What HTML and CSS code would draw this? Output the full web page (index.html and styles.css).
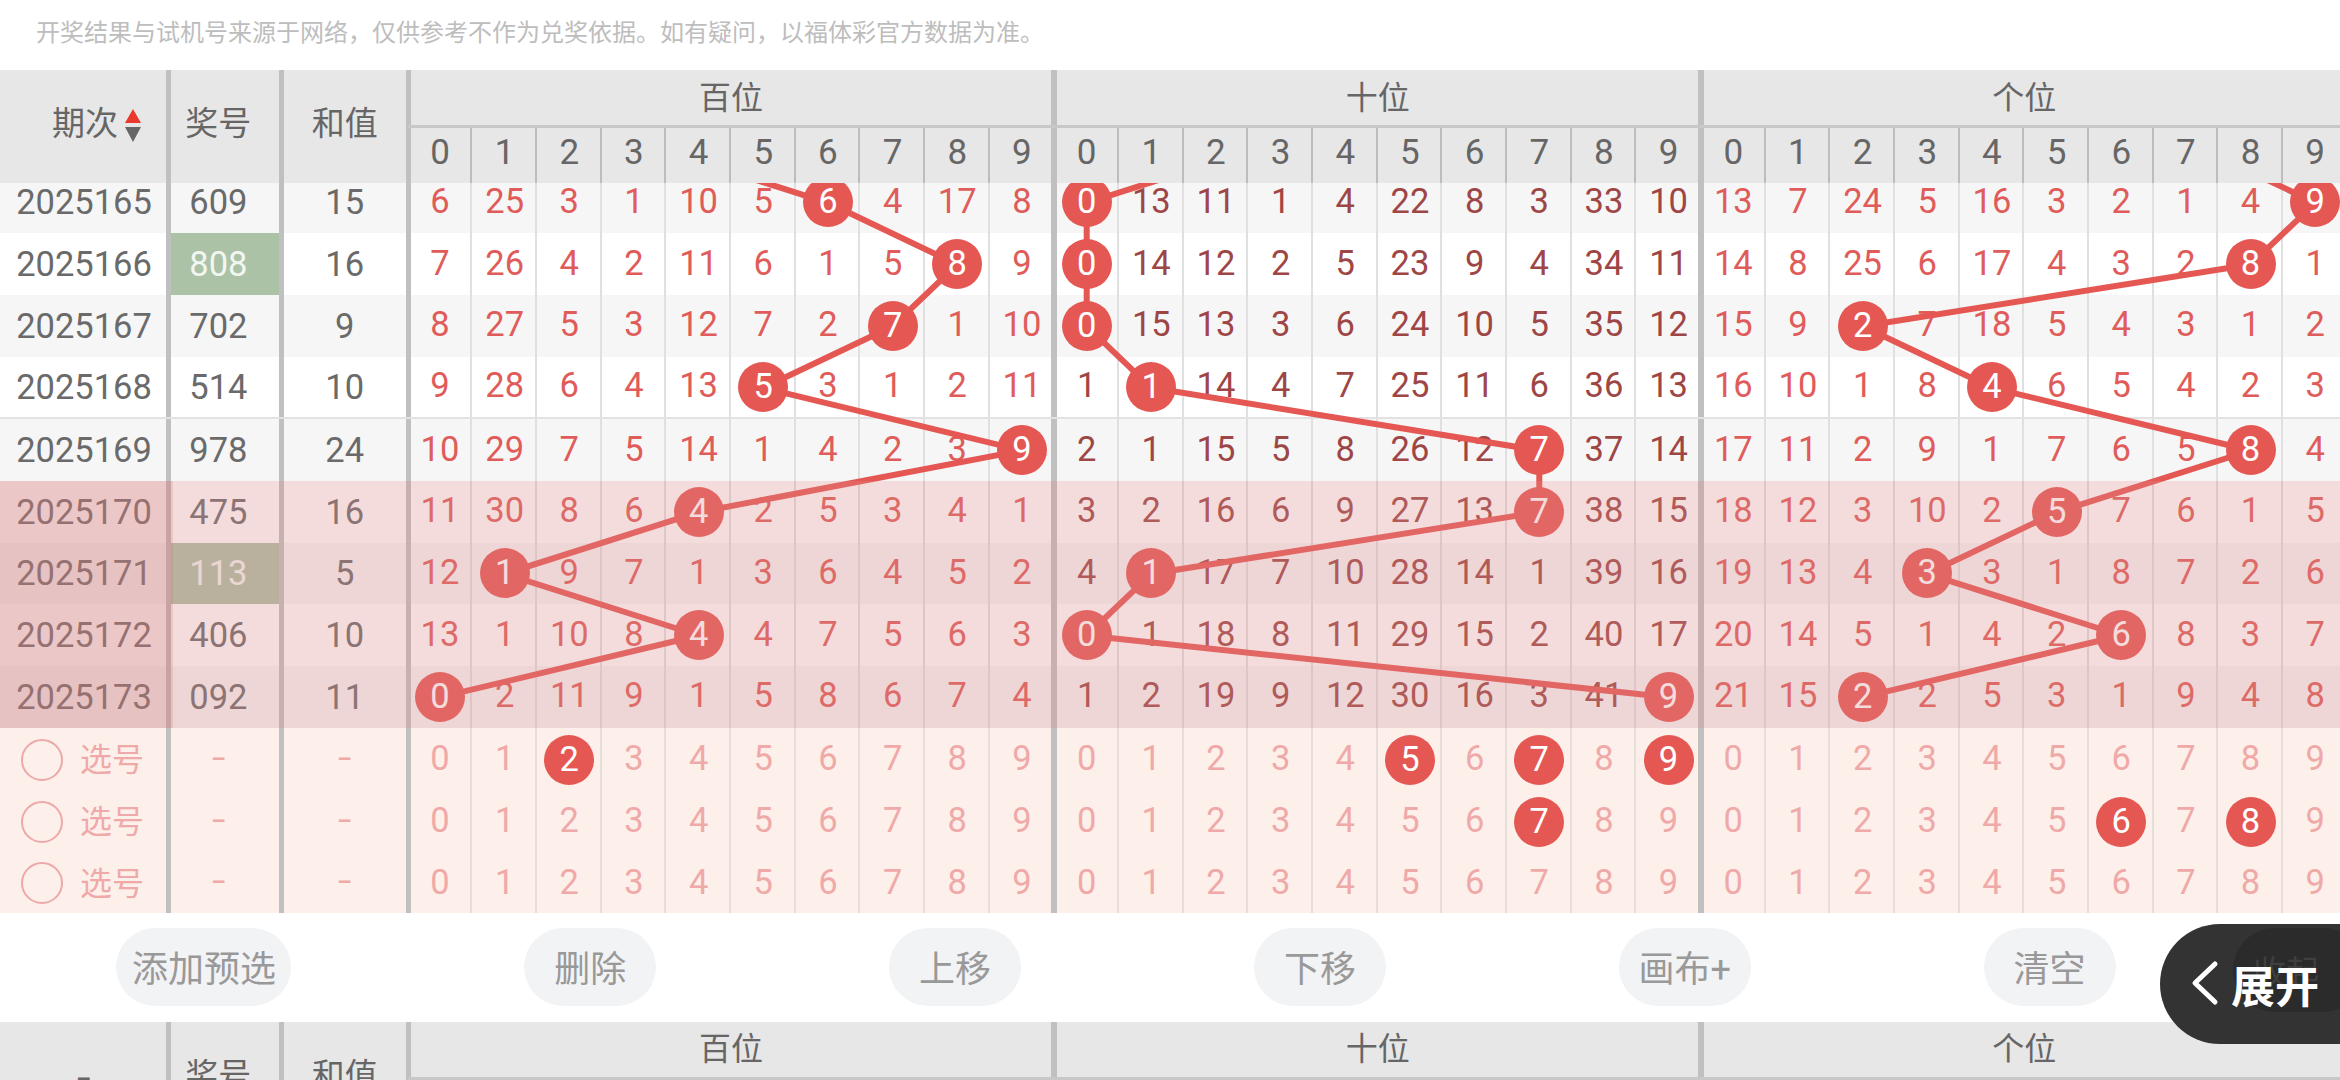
FILE: index.html
```html
<!DOCTYPE html>
<html lang="zh">
<head>
<meta charset="utf-8">
<title>走势图</title>
<link rel="stylesheet" href="styles.css">
</head>
<body>
<div class="page">
<p class="notice">开奖结果与试机号来源于网络，仅供参考不作为兑奖依据。如有疑问，以福体彩官方数据为准。</p>

<div class="head">
  <div class="period h-period"><span>期次</span>
    <svg class="sort" width="16" height="33" viewBox="0 0 16 33"><path class="up" d="M8 0L16 14H0Z"/><path class="down" d="M0 18H16L8 33Z"/></svg>
  </div>
  <div class="prize">奖号</div>
  <div class="sum">和值</div>
  <div class="hgrp"><div class="title">百位</div><div class="grp"><span>0</span><span>1</span><span>2</span><span>3</span><span>4</span><span>5</span><span>6</span><span>7</span><span>8</span><span>9</span></div></div>
  <div class="hgrp"><div class="title">十位</div><div class="grp"><span>0</span><span>1</span><span>2</span><span>3</span><span>4</span><span>5</span><span>6</span><span>7</span><span>8</span><span>9</span></div></div>
  <div class="hgrp"><div class="title">个位</div><div class="grp"><span>0</span><span>1</span><span>2</span><span>3</span><span>4</span><span>5</span><span>6</span><span>7</span><span>8</span><span>9</span></div></div>
</div>

<div class="body">
<div class="rows">
  <div class="row odd"><div class="period">2025165</div><div class="prize">609</div><div class="sum">15</div>
    <div class="grp"><span>6</span><span>25</span><span>3</span><span>1</span><span>10</span><span>5</span><span><b>6</b></span><span>4</span><span>17</span><span>8</span></div>
    <div class="grp tens"><span><b>0</b></span><span>13</span><span>11</span><span>1</span><span>4</span><span>22</span><span>8</span><span>3</span><span>33</span><span>10</span></div>
    <div class="grp"><span>13</span><span>7</span><span>24</span><span>5</span><span>16</span><span>3</span><span>2</span><span>1</span><span>4</span><span><b>9</b></span></div></div>
  <div class="row"><div class="period">2025166</div><div class="prize hot">808</div><div class="sum">16</div>
    <div class="grp"><span>7</span><span>26</span><span>4</span><span>2</span><span>11</span><span>6</span><span>1</span><span>5</span><span><b>8</b></span><span>9</span></div>
    <div class="grp tens"><span><b>0</b></span><span>14</span><span>12</span><span>2</span><span>5</span><span>23</span><span>9</span><span>4</span><span>34</span><span>11</span></div>
    <div class="grp"><span>14</span><span>8</span><span>25</span><span>6</span><span>17</span><span>4</span><span>3</span><span>2</span><span><b>8</b></span><span>1</span></div></div>
  <div class="row odd"><div class="period">2025167</div><div class="prize">702</div><div class="sum">9</div>
    <div class="grp"><span>8</span><span>27</span><span>5</span><span>3</span><span>12</span><span>7</span><span>2</span><span><b>7</b></span><span>1</span><span>10</span></div>
    <div class="grp tens"><span><b>0</b></span><span>15</span><span>13</span><span>3</span><span>6</span><span>24</span><span>10</span><span>5</span><span>35</span><span>12</span></div>
    <div class="grp"><span>15</span><span>9</span><span><b>2</b></span><span>7</span><span>18</span><span>5</span><span>4</span><span>3</span><span>1</span><span>2</span></div></div>
  <div class="row sep"><div class="period">2025168</div><div class="prize">514</div><div class="sum">10</div>
    <div class="grp"><span>9</span><span>28</span><span>6</span><span>4</span><span>13</span><span><b>5</b></span><span>3</span><span>1</span><span>2</span><span>11</span></div>
    <div class="grp tens"><span>1</span><span><b>1</b></span><span>14</span><span>4</span><span>7</span><span>25</span><span>11</span><span>6</span><span>36</span><span>13</span></div>
    <div class="grp"><span>16</span><span>10</span><span>1</span><span>8</span><span><b>4</b></span><span>6</span><span>5</span><span>4</span><span>2</span><span>3</span></div></div>
  <div class="row odd"><div class="period">2025169</div><div class="prize">978</div><div class="sum">24</div>
    <div class="grp"><span>10</span><span>29</span><span>7</span><span>5</span><span>14</span><span>1</span><span>4</span><span>2</span><span>3</span><span><b>9</b></span></div>
    <div class="grp tens"><span>2</span><span>1</span><span>15</span><span>5</span><span>8</span><span>26</span><span>12</span><span><b>7</b></span><span>37</span><span>14</span></div>
    <div class="grp"><span>17</span><span>11</span><span>2</span><span>9</span><span>1</span><span>7</span><span>6</span><span>5</span><span><b>8</b></span><span>4</span></div></div>
  <div class="row"><div class="period">2025170</div><div class="prize">475</div><div class="sum">16</div>
    <div class="grp"><span>11</span><span>30</span><span>8</span><span>6</span><span><b>4</b></span><span>2</span><span>5</span><span>3</span><span>4</span><span>1</span></div>
    <div class="grp tens"><span>3</span><span>2</span><span>16</span><span>6</span><span>9</span><span>27</span><span>13</span><span><b>7</b></span><span>38</span><span>15</span></div>
    <div class="grp"><span>18</span><span>12</span><span>3</span><span>10</span><span>2</span><span><b>5</b></span><span>7</span><span>6</span><span>1</span><span>5</span></div></div>
  <div class="row odd"><div class="period">2025171</div><div class="prize hot">113</div><div class="sum">5</div>
    <div class="grp"><span>12</span><span><b>1</b></span><span>9</span><span>7</span><span>1</span><span>3</span><span>6</span><span>4</span><span>5</span><span>2</span></div>
    <div class="grp tens"><span>4</span><span><b>1</b></span><span>17</span><span>7</span><span>10</span><span>28</span><span>14</span><span>1</span><span>39</span><span>16</span></div>
    <div class="grp"><span>19</span><span>13</span><span>4</span><span><b>3</b></span><span>3</span><span>1</span><span>8</span><span>7</span><span>2</span><span>6</span></div></div>
  <div class="row"><div class="period">2025172</div><div class="prize">406</div><div class="sum">10</div>
    <div class="grp"><span>13</span><span>1</span><span>10</span><span>8</span><span><b>4</b></span><span>4</span><span>7</span><span>5</span><span>6</span><span>3</span></div>
    <div class="grp tens"><span><b>0</b></span><span>1</span><span>18</span><span>8</span><span>11</span><span>29</span><span>15</span><span>2</span><span>40</span><span>17</span></div>
    <div class="grp"><span>20</span><span>14</span><span>5</span><span>1</span><span>4</span><span>2</span><span><b>6</b></span><span>8</span><span>3</span><span>7</span></div></div>
  <div class="row odd"><div class="period">2025173</div><div class="prize">092</div><div class="sum">11</div>
    <div class="grp"><span><b>0</b></span><span>2</span><span>11</span><span>9</span><span>1</span><span>5</span><span>8</span><span>6</span><span>7</span><span>4</span></div>
    <div class="grp tens"><span>1</span><span>2</span><span>19</span><span>9</span><span>12</span><span>30</span><span>16</span><span>3</span><span>41</span><span><b>9</b></span></div>
    <div class="grp"><span>21</span><span>15</span><span><b>2</b></span><span>2</span><span>5</span><span>3</span><span>1</span><span>9</span><span>4</span><span>8</span></div></div>

  <div class="row pick"><div class="period"><i class="radio"></i><span class="pick-label">选号</span></div><div class="prize"><span class="dash">-</span></div><div class="sum"><span class="dash">-</span></div>
    <div class="grp"><span>0</span><span>1</span><span><b>2</b></span><span>3</span><span>4</span><span>5</span><span>6</span><span>7</span><span>8</span><span>9</span></div>
    <div class="grp"><span>0</span><span>1</span><span>2</span><span>3</span><span>4</span><span><b>5</b></span><span>6</span><span><b>7</b></span><span>8</span><span><b>9</b></span></div>
    <div class="grp"><span>0</span><span>1</span><span>2</span><span>3</span><span>4</span><span>5</span><span>6</span><span>7</span><span>8</span><span>9</span></div></div>
  <div class="row pick"><div class="period"><i class="radio"></i><span class="pick-label">选号</span></div><div class="prize"><span class="dash">-</span></div><div class="sum"><span class="dash">-</span></div>
    <div class="grp"><span>0</span><span>1</span><span>2</span><span>3</span><span>4</span><span>5</span><span>6</span><span>7</span><span>8</span><span>9</span></div>
    <div class="grp"><span>0</span><span>1</span><span>2</span><span>3</span><span>4</span><span>5</span><span>6</span><span><b>7</b></span><span>8</span><span>9</span></div>
    <div class="grp"><span>0</span><span>1</span><span>2</span><span>3</span><span>4</span><span>5</span><span><b>6</b></span><span>7</span><span><b>8</b></span><span>9</span></div></div>
  <div class="row pick"><div class="period"><i class="radio"></i><span class="pick-label">选号</span></div><div class="prize"><span class="dash">-</span></div><div class="sum"><span class="dash">-</span></div>
    <div class="grp"><span>0</span><span>1</span><span>2</span><span>3</span><span>4</span><span>5</span><span>6</span><span>7</span><span>8</span><span>9</span></div>
    <div class="grp"><span>0</span><span>1</span><span>2</span><span>3</span><span>4</span><span>5</span><span>6</span><span>7</span><span>8</span><span>9</span></div>
    <div class="grp"><span>0</span><span>1</span><span>2</span><span>3</span><span>4</span><span>5</span><span>6</span><span>7</span><span>8</span><span>9</span></div></div>

  <svg class="lines" width="2348" height="740" viewBox="0 0 2348 740">
    <polyline points="634,-30.8 828,30.8 957.3,92.5 892.7,154.2 763.3,215.8 1022,278.5 698.7,340.2 504.7,401.8 698.7,463.5 440,525.2"/>
    <polyline points="1280.7,-30.8 1086.7,30.8 1086.7,92.5 1086.7,154.2 1151.3,215.8 1539.3,278.5 1539.3,340.2 1151.3,401.8 1086.7,463.5 1668.7,525.2"/>
    <polyline points="2186,-30.8 2315.3,30.8 2250.7,92.5 1862.7,154.2 1992,215.8 2250.7,278.5 2056.7,340.2 1927.3,401.8 2121.3,463.5 1862.7,525.2"/>
  </svg>
  <div class="shade"><div class="shade-col"></div></div>
</div>
</div>

<div class="actions">
  <div class="btn">添加预选</div>
  <div class="btn">删除</div>
  <div class="btn">上移</div>
  <div class="btn">下移</div>
  <div class="btn">画布+</div>
  <div class="btn">清空</div>
</div>

<div class="head">
  <div class="period h-dash"><span class="dash">-</span></div>
  <div class="prize">奖号</div>
  <div class="sum">和值</div>
  <div class="hgrp"><div class="title">百位</div><div class="grp"><span>0</span><span>1</span><span>2</span><span>3</span><span>4</span><span>5</span><span>6</span><span>7</span><span>8</span><span>9</span></div></div>
  <div class="hgrp"><div class="title">十位</div><div class="grp"><span>0</span><span>1</span><span>2</span><span>3</span><span>4</span><span>5</span><span>6</span><span>7</span><span>8</span><span>9</span></div></div>
  <div class="hgrp"><div class="title">个位</div><div class="grp"><span>0</span><span>1</span><span>2</span><span>3</span><span>4</span><span>5</span><span>6</span><span>7</span><span>8</span><span>9</span></div></div>
</div>

<div class="pill">
  <div class="ghost">收起</div>
  <svg class="chev" width="30" height="48" viewBox="0 0 30 48"><path d="M25 4L5 23L25 42"/></svg>
  <span class="pill-text">展开</span>
</div>
</div>
</body>
</html>
```
FILE: styles.css
```css
* { box-sizing: border-box; }
html, body { margin: 0; height: 100%; background: #fff; }
.page {
  position: relative; width: 2340px; height: 1080px; overflow: hidden;
  font-family: Roboto, "Noto Sans CJK SC", sans-serif; font-size: 34.5px; color: #6a6a6a;
}
.notice {
  margin: 0; height: 70px; padding: 17px 0 0 36px;
  font-size: 24px; line-height: 32px; color: #bdbdbd; white-space: nowrap;
}

/* shared columns */
.head, .row { display: flex; width: 2348px; }
.period, .prize, .sum, .grp, .hgrp { flex: none; }
.period { width: 166px; display: flex; align-items: center; justify-content: center; padding-left: 2px; }
.prize {
  width: 112.7px; border-left: 5px solid #c0c0c0; padding-right: 13px;
  display: flex; align-items: center; justify-content: center;
}
.sum {
  width: 128.97px; border-left: 5px solid #c0c0c0;
  box-shadow: inset -2px 0 #c0c0c0; padding-right: 2px;
  display: flex; align-items: center; justify-content: center;
}
.grp { width: 646.67px; display: flex; height: 100%; }
.grp > span {
  flex: none; width: 64.667px; display: flex; align-items: center; justify-content: center;
  box-shadow: inset -2px 0 #e0e0e0; padding-bottom: 3px;
}
.grp > span:first-child { box-shadow: inset 3px 0 #c0c0c0, inset -2px 0 #e0e0e0; }
.grp > span:last-child { box-shadow: inset -3px 0 #c0c0c0; }
.dash { display: inline-block; transform: scaleX(1.4); }

/* header */
.head { height: 112.67px; background: #e7e7e7; flex: none; font-size: 33px; color: #666; position: relative; z-index: 5; }
.head .prize, .head .sum { padding-bottom: 10px; }
.h-period { justify-content: flex-start; padding: 0 0 10px 52px; gap: 7px; }
.sort { flex: none; margin-top: 9px; }
.sort .up { fill: #e8392c; }
.sort .down { fill: #666; }
.h-dash { justify-content: center; font-size: 35px; padding: 0 0 0 2px; }
.hgrp { width: 646.67px; display: flex; flex-direction: column; }
.title {
  height: 58px; border-bottom: 3px solid #c8c8c8; box-shadow: inset 3px 0 #c0c0c0, inset -3px 0 #c0c0c0;
  display: flex; align-items: center; justify-content: center; padding-bottom: 6px; font-size: 32px;
}
.hgrp .grp { height: 54.67px; font-size: 35px; }
.hgrp .grp > span { box-shadow: inset -2px 0 #bdbdbd; padding-bottom: 5px; }
.hgrp .grp > span:first-child { box-shadow: inset 3px 0 #c0c0c0, inset -2px 0 #bdbdbd; }
.hgrp .grp > span:last-child { box-shadow: inset -3px 0 #c0c0c0; }

/* body */
.body { height: 730px; overflow: hidden; flex: none; }
.rows { position: relative; margin-top: -11px; }
.row { height: 61.67px; background: #fff; }
.row.odd { background: #f6f6f6; }
.row.sep { height: 62.67px; border-bottom: 2px solid #e2e2e2; }
.grp > span { color: #e05c5a; }
.tens > span { color: #9e4646; }
.head .grp > span { color: #666; }
.hot { background-clip: padding-box; background-color: #abc2a6; color: #f2f6f0; }
.grp b {
  position: relative; z-index: 2; width: 50px; height: 50px; border-radius: 50%;
  background: #e55752; color: #fff; font-weight: 400;
  display: flex; align-items: center; justify-content: center; margin-top: 3px; padding-bottom: 2px;
}
.lines { position: absolute; left: 0; top: 0; z-index: 1; overflow: visible; pointer-events: none; }
.lines polyline { fill: none; stroke: #e55752; stroke-width: 6; stroke-linejoin: round; }
.shade {
  position: absolute; left: 0; right: 0; top: 309.33px; height: 246.67px; z-index: 3;
  background: rgba(218, 138, 138, .3);
}
.shade-col { width: 173.3px; height: 100%; background: rgba(200, 100, 100, .175); }

/* pick rows */
.row.pick { background: #fdf0ea; color: #f0a9a9; }
.row.pick .grp > span { color: #f0a9a9; box-shadow: inset -2px 0 #e6dedb; padding-bottom: 0; }
.row.pick .grp > span:first-child { box-shadow: inset 3px 0 #c0c0c0, inset -2px 0 #e6dedb; }
.row.pick .grp > span:last-child { box-shadow: inset -3px 0 #c0c0c0; }
.row.pick .prize, .row.pick .sum { padding-bottom: 3px; }
.row.pick .period { justify-content: flex-start; padding-left: 21px; gap: 17px; font-size: 32px; }
.pick-label { padding-bottom: 2px; }
.radio { flex: none; width: 42px; height: 42px; border: 2px solid #eda8a8; border-radius: 50%; margin-top: 3px; }

/* actions */
.actions { height: 109px; flex: none; display: flex; align-items: center; justify-content: space-around; padding: 0 108px 0 0; width: 2340px; }
.btn {
  flex: none; min-width: 132px; height: 78px; padding: 0 15.5px 2px; border-radius: 39px; background: #f2f3f5;
  color: #999; font-size: 36px; display: flex; align-items: center; justify-content: center;
}

/* floating pill */
.pill {
  position: absolute; right: 0; top: 924px; width: 180px; height: 120px; z-index: 9; overflow: hidden;
  border-radius: 60px 0 0 60px; background: #333;
  display: flex; align-items: center;
}
.ghost {
  position: absolute; left: 73px; top: 4px; width: 132px; height: 84px; border-radius: 42px;
  background: #2b2b2b; color: #3f3f3f; font-size: 33px; display: flex; align-items: center; padding-left: 20px;
}
.chev { position: relative; flex: none; margin: 0 0 0 30px; }
.chev path { fill: none; stroke: #fff; stroke-width: 5; stroke-linecap: round; stroke-linejoin: round; }
.pill-text { position: relative; margin-left: 11px; font-size: 44px; font-weight: 700; color: #fff; white-space: nowrap; }
```
